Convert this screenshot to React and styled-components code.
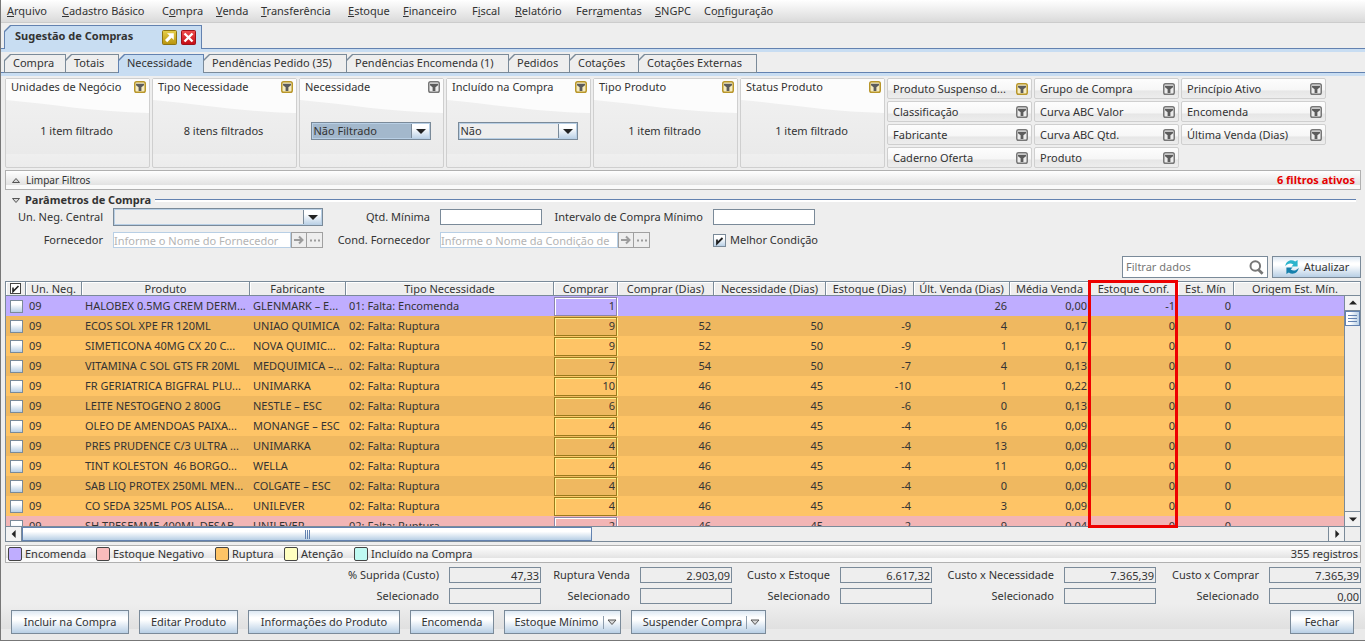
import React from "react";
import styled, { createGlobalStyle, css } from "styled-components";

const color = {
  bg: "#eeeeee",
  text: "#333333",
  line: "#7a8a99",
  blue: "#6382b0",
  active: "#c8ddf2",
  soft: "#b0b0b0",
};

const metal = "linear-gradient(#ffffff, #ffffff 30%, #b8cfe5)";
const barFill = "linear-gradient(#ffffff, #e2e2e2 78%, #fafafa 78%, #fafafa)";

const Global = createGlobalStyle`
  * { box-sizing: border-box; }
  body { margin: 0; background: ${color.bg}; }
  body, button, input, select {
    font-family: "Noto Sans", "Open Sans", sans-serif;
    font-size: 11px;
    line-height: 14px;
    color: ${color.text};
  }
  button, input, select { border-radius: 0; margin: 0; padding: 0; }
`;

const Window = styled.div`
  display: flex;
  flex-direction: column;
  height: 100vh;
  min-height: 560px;
  border-left: 1px solid #777777;
  border-bottom: 1px solid #777777;
  background: ${color.bg};
  white-space: nowrap;
  overflow: hidden;
`;

/* ---------- menu ---------- */
const MenuBar = styled.nav`
  display: flex;
  height: 23px;
  padding: 0 6px;
  align-items: center;
  gap: 13px;
  border-bottom: 1px solid #cccccc;
  background: linear-gradient(#ffffff, #dadada);
`;
const MenuItem = styled.a`
  width: ${(p) => p.$w}px;
  color: inherit;
  text-decoration: none;
`;

/* ---------- tabs ---------- */
const TabRow = styled.div`
  display: flex;
  align-items: flex-end;
  padding: 2px 0 0 3px;
  background: linear-gradient(${color.blue}, ${color.blue}) bottom / 100% 1px no-repeat;
`;
const cut = css`
  clip-path: polygon(6px 0, 100% 0, 100% 100%, 0 100%, 0 6px);
`;
const tabShape = css`
  position: relative;
  isolation: isolate;
  border: 0;
  background: ${(p) => (p.$active ? color.blue : color.line)};
  ${cut}
  &::before {
    content: "";
    position: absolute;
    z-index: -1;
    inset: ${(p) => (p.$active ? "1px 1px 0 1px" : "1px")};
    background: ${(p) => (p.$active ? color.active : color.bg)};
    ${cut}
  }
`;
const WindowTab = styled.div`
  ${tabShape}
  display: flex;
  align-items: center;
  gap: 4px;
  width: 198px;
  height: 24px;
  padding: 0 6px 0 11px;
`;
const WindowTitle = styled.strong`
  flex: 1;
  padding-bottom: 2px;
`;
const IconButton = styled.button`
  display: flex;
  border: 0;
  background: none;
`;
const Tab = styled.button`
  ${tabShape}
  width: ${(p) => p.$w}px;
  height: 19px;
  margin-right: -1px;
  padding: 0 0 1px 9px;
  text-align: left;
`;
const Strip = styled.div`
  height: 3px;
  background: ${color.active};
`;

/* ---------- filters ---------- */
const Filters = styled.section`
  display: grid;
  grid-template-columns: repeat(9, 145px);
  grid-template-rows: repeat(4, 21px);
  grid-auto-flow: column;
  gap: 2px;
  padding: 2px 4px 2px;
`;
const cardFrame = css`
  border: 1px solid #cfcfcf;
  border-radius: 2px;
`;
const Card = styled.article`
  ${cardFrame}
  position: relative;
  grid-row: span 4;
  display: flex;
  flex-direction: column;
  background: linear-gradient(#f2f2f2, #eaeaea 75px, #efefef 75px, #ececec);
`;
const Swoosh = styled.svg`
  position: absolute;
  inset: 0 0 auto;
  width: 100%;
  height: 35px;
`;
const CardHead = styled.header`
  position: relative;
  display: flex;
  align-items: center;
  justify-content: space-between;
  height: 19px;
  padding: 0 3px 4px 5px;
`;
const CardBody = styled.div`
  position: relative;
  display: flex;
  align-items: center;
  justify-content: center;
  height: 66px;
  padding-right: 2px;
`;
const MiniCard = styled.article`
  ${cardFrame}
  display: flex;
  align-items: center;
  justify-content: space-between;
  padding: 0 3px 0 5px;
  background: linear-gradient(#fdfdfd, #f6f6f6 60%, #e6e6e6 61%, #ededed);
`;

const Combo = styled.span`
  display: flex;
  width: ${(p) => p.$w}px;
  height: 18px;
  border: 1px solid ${color.line};
  outline: 1px solid #b8cfe5;
  outline-offset: -2px;
  background: ${metal};
`;
const Select = styled.select`
  flex: 1;
  appearance: none;
  border: 1px solid #b8cfe5;
  border-right: 1px solid ${color.line};
  outline: none;
  padding: 0 1px;
  line-height: 12px;
  background: ${(p) => (p.$focused ? "#a3b8cc" : color.bg)};
`;
const ComboArrow = styled.span`
  display: flex;
  align-items: center;
  justify-content: center;
  width: 18px;
`;

/* ---------- bars ---------- */
const Bar = styled.div`
  display: flex;
  align-items: center;
  flex: none;
  height: ${(p) => p.$h}px;
  margin: 0 4px;
  padding: 0 ${(p) => p.$pad}px;
  border: 1px solid ${color.soft};
  background: ${barFill};
`;
const LinkButton = styled.button`
  display: flex;
  align-items: center;
  gap: 5px;
  border: 0;
  background: none;
  font-size: 10px;
`;
const Alert = styled.strong`
  margin-left: auto;
  color: #e60000;
`;

/* ---------- parameters ---------- */
const Params = styled.section`
  padding: 0 4px;
`;
const ParamsHead = styled.h2`
  display: flex;
  align-items: center;
  gap: 4px;
  height: 18px;
  margin: 0;
  padding: 2px 5px 0 6px;
  font-size: 11px;
  line-height: 14px;
  &::after {
    content: "";
    flex: 1;
    height: 2px;
    border-top: 1px solid ${color.blue};
    background: #ffffff;
  }
`;
const ParamsGrid = styled.div`
  display: grid;
  grid-template-columns: 98px 210px 97px 102px 151px 102px;
  grid-auto-rows: 18px;
  align-items: center;
  gap: 5px 10px;
`;
const FieldLabel = styled.label`
  text-align: right;
`;
const TextInput = styled.input`
  width: 100%;
  height: 16px;
  border: 1px solid ${color.line};
  background: ${(p) => (p.readOnly ? color.bg : "#ffffff")};
  text-align: ${(p) => (p.readOnly ? "right" : "left")};
  padding: 0 1px;
`;
const Lookup = styled.span`
  display: flex;
  width: 210px;
  grid-column: span ${(p) => p.$span || 1};
`;
const LookupInput = styled(TextInput)`
  flex: 1;
  min-width: 0;
  padding: 0;
  border-color: #b8cfe5;
  &::placeholder { color: #b4b4b4; opacity: 1; }
`;
const LookupButton = styled.button`
  display: flex;
  align-items: center;
  justify-content: center;
  width: 16px;
  height: 16px;
  border: 1px solid #a0a0a0;
  background: ${color.bg};
  & + & { border-left: 0; }
`;
const tick = (width) =>
  `url("data:image/svg+xml,%3Csvg xmlns='http://www.w3.org/2000/svg' viewBox='0 0 11 11'%3E%3Cpath d='M3 4.500v4L8.500 3' fill='none' stroke='%23222' stroke-width='${width}'/%3E%3C/svg%3E") center / 11px no-repeat`;
const Check = styled.input`
  appearance: none;
  flex: none;
  width: 13px;
  height: 13px;
  border: 1px solid ${color.line};
  background: ${metal};
  &:checked { background: ${tick(1.8)}, ${metal}; }
`;
const HeadCheck = styled(Check)`
  display: block;
  margin: 0 auto;
  width: 11px;
  height: 11px;
  border-color: #444444;
  background: #ffffff;
  &:checked { background: ${tick(1.6)}, #ffffff; }
`;
const CheckLabel = styled.label`
  display: flex;
  align-items: center;
  gap: 4px;
`;

/* ---------- table ---------- */
const Tools = styled.div`
  display: flex;
  justify-content: flex-end;
  gap: 4px;
  height: 22px;
  margin: 7px 4px 3px;
`;
const Search = styled.label`
  display: flex;
  align-items: center;
  width: 146px;
  padding: 0 3px;
  border: 1px solid ${color.line};
  background: #ffffff;
`;
const SearchInput = styled.input`
  flex: 1;
  min-width: 0;
  border: 0;
  outline: 0;
  &::placeholder { color: #777777; opacity: 1; }
`;
const Button = styled.button`
  display: flex;
  align-items: center;
  justify-content: center;
  gap: 4px;
  width: ${(p) => p.$w}px;
  height: ${(p) => p.$h || 24}px;
  border: 1px solid ${color.line};
  background: linear-gradient(#dde8f3, #ffffff 30%, #ffffff 40%, #b8cfe5);
`;
const Panel = styled.section`
  position: relative;
  flex: 1 1 0;
  min-height: 0;
  display: grid;
  grid-template-columns: 1fr 16px;
  grid-template-rows: 14px 1fr 15px;
  margin: 0 4px 3px;
  border: 1px solid ${color.line};
`;
const Viewport = styled.div`
  grid-row: 1 / 3;
  overflow: hidden;
`;
const Table = styled.table`
  width: 100%;
  table-layout: fixed;
  border-collapse: separate;
  border-spacing: 0;
`;
const Th = styled.th`
  height: 14px;
  padding: 0 0 0 ${(p) => p.$pad || 0}px;
  border-right: ${(p) => (p.$last ? 0 : 1)}px solid ${color.line};
  border-bottom: 1px solid ${color.line};
  box-shadow: inset 1px 1px #ffffff;
  font-weight: 400;
  line-height: 12px;
  overflow: hidden;
`;
const HeadFiller = styled.div`
  border-bottom: 1px solid ${color.line};
  box-shadow: inset 0 1px #ffffff;
`;
const tones = {
  order: ["#bfadff", "#bfadff"],
  rupture: ["#fec466", "#efb860"],
  negative: ["#f2b5b5", "#f2b5b5"],
};
const Row = styled.tr`
  height: 20px;
  background: ${(p) => tones[p.$tone][p.$odd ? 1 : 0]};
`;
const Td = styled.td`
  height: 20px;
  padding: 0 3px;
  text-align: ${(p) => (p.$num ? "right" : "left")};
  white-space: pre;
  overflow: hidden;
  input[type="checkbox"] { display: block; margin-left: 1px; }
`;
const QtyTd = styled.td`
  height: 20px;
  padding: 0 1px 0 0;
`;
const Qty = styled.input`
  display: block;
  width: 100%;
  height: 19px;
  padding: 0 1px 2px;
  text-align: right;
  background: transparent;
  border: 1px solid ${(p) => (p.$tone === "rupture" ? "#9a7a1c" : "#8b86a8")};
  box-shadow: inset 1px 1px ${(p) => (p.$tone === "rupture" ? "#fff08a" : "#ffffff")},
    1px 1px ${(p) => (p.$tone === "rupture" ? "#fff08a" : "#ffffff")};
`;
const Highlight = styled.div`
  position: absolute;
  left: 1082px;
  top: -2px;
  bottom: 13px;
  width: 90px;
  border: 3px solid #ee0000;
  pointer-events: none;
`;
const Scroll = styled.div`
  display: flex;
  flex-direction: ${(p) => (p.$vertical ? "column" : "row")};
  border-${(p) => (p.$vertical ? "left" : "top")}: 1px solid ${color.line};
`;
const ScrollButton = styled.button`
  display: flex;
  align-items: center;
  justify-content: center;
  flex: none;
  width: ${(p) => (p.$vertical ? "auto" : "16px")};
  height: ${(p) => (p.$vertical ? "15px" : "auto")};
  border: 0;
  border-${(p) => p.$edge}: 1px solid ${color.line};
  background: #f2f2f2;
`;
const Track = styled.div`
  display: flex;
  flex-direction: inherit;
  flex: 1;
`;
const Thumb = styled.div`
  display: flex;
  align-items: center;
  justify-content: center;
  flex: none;
  ${(p) => (p.$vertical ? "height: 15px;" : "width: 570px;")}
  border: 1px solid ${color.blue};
  background: ${(p) => (p.$vertical ? "linear-gradient(90deg, #ffffff, #ffffff 30%, #b8cfe5)" : metal)};
`;
const Corner = styled.div`
  border-top: 1px solid ${color.line};
  border-left: 1px solid ${color.line};
`;

/* ---------- legend, totals, actions ---------- */
const LegendItem = styled.span`
  display: flex;
  align-items: center;
  gap: 3px;
  width: ${(p) => p.$w}px;
  &::before {
    content: "";
    width: 12px;
    height: 12px;
    border: 1px solid #444444;
    border-radius: 2px;
    background: ${(p) => p.$fill};
  }
`;
const Count = styled.span`
  margin-left: auto;
`;
const Totals = styled.section`
  display: grid;
  grid-template-columns: auto 92px 79px 92px 88px 92px 112px 92px 93px 92px;
  grid-auto-rows: 16px;
  justify-content: end;
  align-items: center;
  gap: 5px 10px;
  margin: 4px 4px 0;
`;
const Actions = styled.footer`
  display: flex;
  gap: 10px;
  padding: 6px 11px 6px 10px;
  background: linear-gradient(#eeeeee, #e0e0e0 25px, #eaeaea 25px, #eaeaea);
`;
const MenuButton = styled(Button)`
  gap: 3px;
  padding-left: 6px;
`;
const Spacer = styled.span`
  flex: 1;
`;
const Divider = styled.span`
  width: 1px;
  height: 13px;
  margin-left: 1px;
  background: #8d9dad;
`;

/* ---------- icons ---------- */
const FilterIcon = ({ on }) => (
  <svg width="12" height="12" viewBox="0 0 12 12" aria-hidden="true">
    <rect x="0.75" y="0.75" width="10.5" height="10.5" rx="1.8" fill={on ? "#f6ecc0" : "#ececec"} stroke={on ? "#b8962a" : "#777777"} strokeWidth="1.5" />
    <path d="M2 2.800h8v1.400L7.400 6.300V10H4.600V6.300L2 4.200z" fill="#5c5c5c" />
  </svg>
);
const Triangle = ({ d, w = 10, h = 10, outline }) => (
  <svg width={w} height={h} viewBox="0 0 10 10" aria-hidden="true">
    <path d={d} fill={outline ? "#d8d8d8" : "#222222"} stroke={outline ? "#555555" : "none"} />
  </svg>
);
const DOWN = "M0 3h10L5 8z";
const UP = "M0 7h10L5 2z";
const LEFT = "M7 0v10L2 5z";
const RIGHT = "M3 0v10l5-5z";
const OpenIcon = () => (
  <svg width="15" height="15" viewBox="0 0 15 15" aria-hidden="true">
    <defs>
      <linearGradient id="gold" x2="0" y2="1"><stop stopColor="#e6cf4c" /><stop offset="1" stopColor="#b8930c" /></linearGradient>
    </defs>
    <rect x="0.5" y="0.5" width="14" height="14" rx="1" fill="url(#gold)" stroke="#8c7414" />
    <path d="M5 3.2h6.8V10L9.6 7.8 5.2 12.2 3 10l4.4-4.4z" fill="#ffffff" />
  </svg>
);
const CloseIcon = () => (
  <svg width="15" height="15" viewBox="0 0 15 15" aria-hidden="true">
    <defs>
      <linearGradient id="red" x2="0" y2="1"><stop stopColor="#f05050" /><stop offset="1" stopColor="#c40a14" /></linearGradient>
    </defs>
    <rect x="0.5" y="0.5" width="14" height="14" rx="1" fill="url(#red)" stroke="#9c1018" />
    <path d="M3.5 3.5l8 8M11.5 3.5l-8 8" stroke="#ffffff" strokeWidth="2.4" />
  </svg>
);
const SearchIcon = () => (
  <svg width="15" height="15" viewBox="0 0 15 15" fill="none" stroke="#777777" aria-hidden="true">
    <circle cx="6.3" cy="6" r="4.8" strokeWidth="2" />
    <path d="M9 9.2l4.6 4.6" strokeWidth="2.8" />
  </svg>
);
const RefreshIcon = () => (
  <svg width="16" height="16" viewBox="0 0 16 16" aria-hidden="true">
    <path d="M1.400 7.200C1.400 2.600 7-.6 11.200 2.600L13.600 1v6.400H7.400l2-2C6.800 3.600 3.400 4.200 1.400 7.200z" fill="#2cb4cc" />
    <path d="M14.600 8.800c0 4.600-5.600 7.800-9.800 4.600L2.400 15V8.600h6.200l-2 2c2.600 1.800 6 1.200 8-1.800z" fill="#1680ac" />
  </svg>
);
const ArrowIcon = () => (
  <svg width="10" height="10" viewBox="0 0 10 10" fill="none" stroke="#9c9c9c" strokeWidth="2" aria-hidden="true">
    <path d="M0 5h8M5 1.500l3.500 3.500L5 8.500" />
  </svg>
);
const DotsIcon = () => (
  <svg width="10" height="10" viewBox="0 0 10 10" fill="#9c9c9c" aria-hidden="true">
    <path d="M0 4.500h2v2H0zM4 4.500h2v2H4zM8 4.500h2v2H8z" />
  </svg>
);
const Grip = ({ vertical }) => (
  <svg width="9" height="9" viewBox="0 0 9 9" aria-hidden="true">
    <path d={vertical ? "M0 1.500h9M0 4.500h9M0 7.500h9" : "M2.500 0v9M4.500 0v9M6.500 0v9"} stroke="#6382b0" />
  </svg>
);

/* ---------- data ---------- */
const menu = [
  ["", "A", "rquivo", 42], ["", "C", "adastro Básico", 87], ["C", "o", "mpra", 41], ["", "V", "enda", 32],
  ["", "T", "ransferência", 74], ["", "E", "stoque", 42], ["", "F", "inanceiro", 56], ["F", "i", "scal", 30],
  ["", "R", "elatório", 48], ["Ferr", "a", "mentas", 66], ["", "S", "NGPC", 36], ["Co", "n", "figuração", 74],
];
const tabs = [
  ["Compra", 62], ["Totais", 54], ["Necessidade", 86], ["Pendências Pedido (35)", 144],
  ["Pendências Encomenda (1)", 163], ["Pedidos", 62], ["Cotações", 70], ["Cotações Externas", 119],
];
const cards = [
  { title: "Unidades de Negócio", text: "1 item filtrado", on: true },
  { title: "Tipo Necessidade", text: "8 itens filtrados", on: true },
  { title: "Necessidade", option: "Não Filtrado", focused: true },
  { title: "Incluído na Compra", option: "Não", on: true },
  { title: "Tipo Produto", text: "1 item filtrado", on: true },
  { title: "Status Produto", text: "1 item filtrado", on: true },
];
const miniCards = [
  "Produto Suspenso d...", "Classificação", "Fabricante", "Caderno Oferta",
  "Grupo de Compra", "Curva ABC Valor", "Curva ABC Qtd.", "Produto",
  "Princípio Ativo", "Encomenda", "Última Venda (Dias)",
];
const columns = [
  ["Un. Neg.", 56], ["Produto", 168], ["Fabricante", 96], ["Tipo Necessidade", 208], ["Comprar", 64],
  ["Comprar (Dias)", 96], ["Necessidade (Dias)", 112], ["Estoque (Dias)", 88], ["Últ. Venda (Dias)", 96],
  ["Média Venda", 80], ["Estoque Conf.", 88], ["Est. Mín", 56], ["Origem Est. Mín.", null],
];
const RUP = "02: Falta: Ruptura";
const rows = [
  ["order", "HALOBEX 0.5MG CREM DERM...", "GLENMARK – E...", "01: Falta: Encomenda", "1", "", "", "", "26", "0,00", "-1"],
  ["rupture", "ECOS SOL XPE FR 120ML", "UNIAO QUIMICA", RUP, "9", "52", "50", "-9", "4", "0,17", "0"],
  ["rupture", "SIMETICONA 40MG CX 20 C...", "NOVA QUIMIC...", RUP, "9", "52", "50", "-9", "1", "0,17", "0"],
  ["rupture", "VITAMINA C SOL GTS FR 20ML", "MEDQUIMICA –...", RUP, "7", "54", "50", "-7", "4", "0,13", "0"],
  ["rupture", "FR GERIATRICA BIGFRAL PLU...", "UNIMARKA", RUP, "10", "46", "45", "-10", "1", "0,22", "0"],
  ["rupture", "LEITE NESTOGENO 2 800G", "NESTLE – ESC", RUP, "6", "46", "45", "-6", "0", "0,13", "0"],
  ["rupture", "OLEO DE AMENDOAS PAIXA...", "MONANGE – ESC", RUP, "4", "46", "45", "-4", "16", "0,09", "0"],
  ["rupture", "PRES PRUDENCE C/3 ULTRA ...", "UNIMARKA", RUP, "4", "46", "45", "-4", "13", "0,09", "0"],
  ["rupture", "TINT KOLESTON  46 BORGO...", "WELLA", RUP, "4", "46", "45", "-4", "11", "0,09", "0"],
  ["rupture", "SAB LIQ PROTEX 250ML MEN...", "COLGATE – ESC", RUP, "4", "46", "45", "-4", "0", "0,09", "0"],
  ["rupture", "CO SEDA 325ML POS ALISA...", "UNILEVER", RUP, "4", "46", "45", "-4", "3", "0,09", "0"],
  ["negative", "SH TRESEMME 400ML DESAB...", "UNILEVER", RUP, "2", "46", "45", "-2", "9", "0,04", "0"],
];
const legend = [
  ["Encomenda", "#bfadff", 88], ["Estoque Negativo", "#f9bcbc", 119], ["Ruptura", "#fec466", 69],
  ["Atenção", "#ffffc0", 70], ["Incluído na Compra", "#bffaf2", 134],
];
const totals = [
  ["% Suprida (Custo)", "47,33", ""], ["Ruptura Venda", "2.903,09", ""], ["Custo x Estoque", "6.617,32", ""],
  ["Custo x Necessidade", "7.365,39", ""], ["Custo x Comprar", "7.365,39", "0,00"],
];
const actions = [
  ["Incluir na Compra", 118], ["Editar Produto", 99], ["Informações do Produto", 152], ["Encomenda", 84],
];
const menuActions = [["Estoque Mínimo", 117], ["Suspender Compra", 135]];

function ComboBox({ id, label, option, width, focused }) {
  return (
    <Combo $w={width}>
      <Select id={id} aria-label={label} $focused={focused}>
        <option>{option}</option>
      </Select>
      <ComboArrow><Triangle d={DOWN} /></ComboArrow>
    </Combo>
  );
}

function LookupField({ id, placeholder, span }) {
  return (
    <Lookup $span={span}>
      <LookupInput id={id} placeholder={placeholder} disabled />
      <LookupButton aria-label="Buscar" disabled><ArrowIcon /></LookupButton>
      <LookupButton aria-label="Mais opções" disabled><DotsIcon /></LookupButton>
    </Lookup>
  );
}

function DataRow({ row, index }) {
  const [tone, product, maker, need, qty, ...nums] = row;
  return (
    <Row $tone={tone} $odd={index % 2 === 1}>
      <Td><Check type="checkbox" aria-label={product} /></Td>
      <Td>09</Td>
      <Td>{product}</Td>
      <Td>{maker}</Td>
      <Td>{need}</Td>
      <QtyTd><Qty $tone={tone} defaultValue={qty} aria-label={`Comprar ${product}`} /></QtyTd>
      {nums.map((n, i) => <Td key={i} $num>{n}</Td>)}
      <Td $num>0</Td>
      <Td />
    </Row>
  );
}

export default function App() {
  return (
    <Window>
      <Global />
      <MenuBar>
        {menu.map(([a, key, b, w]) => (
          <MenuItem href="#" key={a + key + b} $w={w}>{a}<u>{key}</u>{b}</MenuItem>
        ))}
      </MenuBar>

      <TabRow>
        <WindowTab $active>
          <WindowTitle>Sugestão de Compras</WindowTitle>
          <IconButton aria-label="Destacar"><OpenIcon /></IconButton>
          <IconButton aria-label="Fechar aba"><CloseIcon /></IconButton>
        </WindowTab>
      </TabRow>
      <Strip />
      <TabRow>
        {tabs.map(([t, w], i) => <Tab key={t} $w={w} $active={i === 2}>{t}</Tab>)}
      </TabRow>
      <Strip />

      <Filters>
        {cards.map((c) => (
          <Card key={c.title}>
            <Swoosh viewBox="0 0 143 35" preserveAspectRatio="none" aria-hidden="true">
              <path d="M0 0h143v34C90 33 45 25 0 21z" fill="#fcfcfc" />
            </Swoosh>
            <CardHead>{c.title}<FilterIcon on={c.on} /></CardHead>
            <CardBody>
              {c.option ? <ComboBox label={c.title} option={c.option} width={120} focused={c.focused} /> : c.text}
            </CardBody>
          </Card>
        ))}
        {miniCards.map((t, i) => <MiniCard key={t}>{t}<FilterIcon on={i === 0} /></MiniCard>)}
      </Filters>

      <Bar $h={20} $pad={5}>
        <LinkButton><Triangle d="M1.500 7.500h7L5 3.500z" outline />Limpar Filtros</LinkButton>
        <Alert>6 filtros ativos</Alert>
      </Bar>

      <Params>
        <ParamsHead><Triangle d="M1.500 3.500h7L5 7.500z" outline />Parâmetros de Compra</ParamsHead>
        <ParamsGrid>
          <FieldLabel htmlFor="unit">Un. Neg. Central</FieldLabel>
          <ComboBox id="unit" option="" width={210} />
          <FieldLabel htmlFor="min">Qtd. Mínima</FieldLabel>
          <TextInput id="min" />
          <FieldLabel htmlFor="interval">Intervalo de Compra Mínimo</FieldLabel>
          <TextInput id="interval" />
          <FieldLabel htmlFor="supplier">Fornecedor</FieldLabel>
          <LookupField id="supplier" placeholder="Informe o Nome do Fornecedor" />
          <FieldLabel htmlFor="terms">Cond. Fornecedor</FieldLabel>
          <LookupField id="terms" placeholder="Informe o Nome da Condição de" span={2} />
          <CheckLabel><Check type="checkbox" defaultChecked />Melhor Condição</CheckLabel>
        </ParamsGrid>
      </Params>

      <Tools>
        <Search>
          <SearchInput placeholder="Filtrar dados" aria-label="Filtrar dados" />
          <SearchIcon />
        </Search>
        <Button $w={89} $h={22}><RefreshIcon />Atualizar</Button>
      </Tools>

      <Panel>
        <Viewport>
          <Table>
            <colgroup>
              <col width="20" />
              {columns.map(([t, w]) => <col key={t} width={w || undefined} />)}
            </colgroup>
            <thead>
              <tr>
                <Th><HeadCheck type="checkbox" defaultChecked aria-label="Selecionar todos" /></Th>
                {columns.map(([t, w]) => <Th key={t} $last={!w} $pad={w ? 0 : 12}>{t}</Th>)}
              </tr>
            </thead>
            <tbody>
              {rows.map((r, i) => <DataRow key={r[1]} row={r} index={i} />)}
            </tbody>
          </Table>
        </Viewport>
        <HeadFiller />
        <Scroll $vertical>
          <ScrollButton $vertical $edge="bottom" aria-label="Subir"><Triangle d={UP} w={8} h={8} /></ScrollButton>
          <Track><Thumb $vertical><Grip vertical /></Thumb></Track>
          <ScrollButton $vertical $edge="top" aria-label="Descer"><Triangle d={DOWN} w={8} h={8} /></ScrollButton>
        </Scroll>
        <Scroll>
          <ScrollButton $edge="right" aria-label="Rolar à esquerda"><Triangle d={LEFT} w={8} h={8} /></ScrollButton>
          <Track><Thumb><Grip /></Thumb></Track>
          <ScrollButton $edge="left" aria-label="Rolar à direita"><Triangle d={RIGHT} w={8} h={8} /></ScrollButton>
        </Scroll>
        <Corner />
        <Highlight />
      </Panel>

      <Bar $h={18} $pad={2}>
        {legend.map(([t, fill, w]) => <LegendItem key={t} $fill={fill} $w={w}>{t}</LegendItem>)}
        <Count>355 registros</Count>
      </Bar>

      <Totals>
        {totals.map(([label, value], i) => (
          <React.Fragment key={label}>
            <FieldLabel htmlFor={`total${i}`}>{label}</FieldLabel>
            <TextInput id={`total${i}`} readOnly value={value} />
          </React.Fragment>
        ))}
        {totals.map(([label, , selected], i) => (
          <React.Fragment key={label}>
            <FieldLabel htmlFor={`selected${i}`}>Selecionado</FieldLabel>
            <TextInput id={`selected${i}`} readOnly value={selected} />
          </React.Fragment>
        ))}
      </Totals>

      <Actions>
        {actions.map(([t, w]) => <Button key={t} $w={w}>{t}</Button>)}
        {menuActions.map(([t, w]) => (
          <MenuButton key={t} $w={w}>
            {t}
            <Divider />
            <Triangle d="M1 3h8L5 7.500z" outline />
          </MenuButton>
        ))}
        <Spacer />
        <Button $w={64}>Fechar</Button>
      </Actions>
    </Window>
  );
}
